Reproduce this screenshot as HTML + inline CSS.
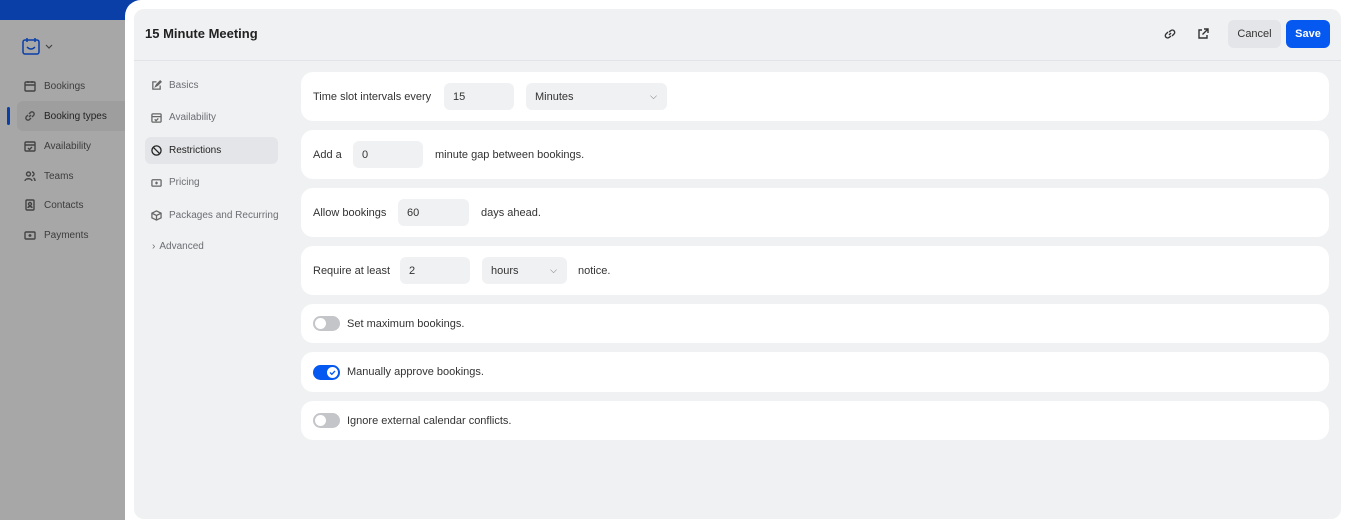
<!DOCTYPE html><html><head><style>
*{box-sizing:border-box;margin:0;padding:0}
body{width:1360px;height:497px;overflow:hidden;position:relative;font-family:"Liberation Sans",sans-serif;background:#a7a7a7;font-size:11px;color:#2a2a2a}
.a{position:absolute}
.nav{left:24px;display:flex;align-items:center;gap:8px;color:#3c3c3c;font-size:10px}
.nav svg{width:12px;height:12px;fill:none;stroke:#444;stroke-width:1.4}
.sn{left:151px;display:flex;align-items:center;gap:7px;color:#6b6e72;font-size:10px}
.sn svg{width:11px;height:11px;fill:none;stroke:#666;stroke-width:1.4}
.card{left:301px;width:1028px;background:#fff;border-radius:12px;display:flex;align-items:center;padding-left:12px;font-size:11px;color:#333}
.in{background:#f0f1f3;border-radius:6px;height:27px;display:flex;align-items:center;padding-left:9px;font-size:11px;color:#333}
.tg{width:27px;height:15px;border-radius:8px;background:#c4c5c8;position:relative;margin-right:7px}
.tg:after{content:"";position:absolute;left:2px;top:2px;width:11px;height:11px;border-radius:50%;background:#fff}
.tg.on:after{display:none}
</style></head><body>
<div class="a" style="left:0;top:0;width:140px;height:20px;background:#0a3fa8"></div>
<svg class="a" style="left:22px;top:37px" width="34" height="20" viewBox="0 0 34 20" fill="none" stroke="#0a3fa8" stroke-width="1.5"><rect x="1" y="3" width="16" height="14" rx="2"/><path d="M5 1v4M13 1v4M5 10q4 4 8 0"/><path d="M24 8l3 3 3-3" stroke="#444" stroke-width="1.2"/></svg>
<div class="a" style="left:17px;top:101px;width:112px;height:30px;background:#9e9e9e;border-radius:6px"></div>
<div class="a" style="left:7px;top:107px;width:3px;height:18px;background:#0a3fa8;border-radius:2px"></div>
<div class="a nav" style="top:80px"><svg viewBox="0 0 12 12"><rect x="1" y="2" width="10" height="9" rx="1"/><path d="M1 5h10M4 1v2M8 1v2"/></svg>Bookings</div>
<div class="a nav" style="top:110px;color:#222"><svg viewBox="0 0 12 12"><path d="M5 7l2-2M4 5L2.5 6.5a2 2 0 003 3L7 8M8 7l1.5-1.5a2 2 0 00-3-3L5 4"/></svg>Booking types</div>
<div class="a nav" style="top:140px"><svg viewBox="0 0 12 12"><rect x="1" y="2" width="10" height="9" rx="1"/><path d="M1 5h10M4 8l1.5 1.5L8 7"/></svg>Availability</div>
<div class="a nav" style="top:170px"><svg viewBox="0 0 12 12"><circle cx="4.5" cy="4" r="2"/><path d="M1 11c0-3 7-3 7 0M8 2a2 2 0 010 4M9.5 8c1 .5 1.5 1.5 1.5 3"/></svg>Teams</div>
<div class="a nav" style="top:199px"><svg viewBox="0 0 12 12"><rect x="2" y="1" width="8" height="10" rx="1"/><circle cx="6" cy="5" r="1.5"/><path d="M4 9c0-2 4-2 4 0"/></svg>Contacts</div>
<div class="a nav" style="top:229px"><svg viewBox="0 0 12 12"><rect x="1" y="3" width="10" height="7" rx="1"/><path d="M6 5v3M4.5 6.5h3"/></svg>Payments</div>
<div class="a" style="left:125px;top:0;width:1240px;height:520px;background:#fff;border-radius:16px 0 0 0"></div>
<div class="a" style="left:134px;top:9px;width:1207px;height:510px;background:#f0f1f3;border-radius:10px"></div>
<div class="a" style="left:134px;top:60px;width:1207px;height:1px;background:#e2e3e6"></div>
<div class="a" style="left:145px;top:26px;font-size:13px;font-weight:bold;color:#222">15 Minute Meeting</div>
<svg class="a" style="left:1163px;top:27px" width="14" height="14" viewBox="0 0 14 14" fill="none" stroke="#333" stroke-width="1.4"><path d="M6 8l2-2M5 5L3 7a2.3 2.3 0 003.3 3.3L8 9M9 9l2-2A2.3 2.3 0 007.7 3.7L6 5"/></svg>
<svg class="a" style="left:1196px;top:27px" width="14" height="14" viewBox="0 0 14 14" fill="none" stroke="#333" stroke-width="1.4"><path d="M6 3H3v8h8V8M8 2h4v4M12 2L6.5 7.5"/></svg>
<div class="a" style="left:1228px;top:20px;width:53px;height:28px;background:#e4e5e8;border-radius:6px;display:flex;align-items:center;justify-content:center;font-size:11px;color:#333">Cancel</div>
<div class="a" style="left:1286px;top:20px;width:44px;height:28px;background:#0558f0;border-radius:6px;display:flex;align-items:center;justify-content:center;font-size:11px;color:#fff;font-weight:bold">Save</div>
<div class="a" style="left:145px;top:137px;width:133px;height:27px;background:#e4e5e8;border-radius:6px"></div>
<div class="a sn" style="top:80px"><svg viewBox="0 0 12 12"><path d="M10 6v4H2V2h4M5 7l1-2 4-4 1 1-4 4z"/></svg>Basics</div>
<div class="a sn" style="top:112px"><svg viewBox="0 0 12 12"><rect x="1" y="2" width="10" height="9" rx="1"/><path d="M1 5h10M4 8l1.5 1.5L8 7"/></svg>Availability</div>
<div class="a sn" style="top:145px;color:#222"><svg viewBox="0 0 12 12" style="stroke:#222"><circle cx="6" cy="6" r="5"/><path d="M2.5 2.5l7 7"/></svg>Restrictions</div>
<div class="a sn" style="top:177px"><svg viewBox="0 0 12 12"><rect x="1" y="3" width="10" height="7" rx="1"/><path d="M6 5v3M4.5 6.5h3"/></svg>Pricing</div>
<div class="a sn" style="top:210px"><svg viewBox="0 0 12 12"><path d="M6 1l5 2.5v5L6 11 1 8.5v-5zM1 3.5L6 6l5-2.5M6 6v5"/></svg>Packages and Recurring</div>
<div class="a sn" style="top:241px;left:152px;gap:4px">›<span>Advanced</span></div>
<div class="a card" style="top:72px;height:49px">Time slot intervals every<div class="in" style="position:absolute;left:143px;top:11px;width:70px">15</div><div class="in" style="position:absolute;left:225px;top:11px;width:141px">Minutes<span style="position:absolute;right:10px;font-size:9px;color:#666">⌵</span></div></div>
<div class="a card" style="top:130px;height:49px">Add a<div class="in" style="position:absolute;left:52px;top:11px;width:70px">0</div><span style="position:absolute;left:134px">minute gap between bookings.</span></div>
<div class="a card" style="top:188px;height:49px">Allow bookings<div class="in" style="position:absolute;left:97px;top:11px;width:71px">60</div><span style="position:absolute;left:180px">days ahead.</span></div>
<div class="a card" style="top:246px;height:49px">Require at least<div class="in" style="position:absolute;left:99px;top:11px;width:70px">2</div><div class="in" style="position:absolute;left:181px;top:11px;width:85px">hours<span style="position:absolute;right:10px;font-size:9px;color:#666">⌵</span></div><span style="position:absolute;left:277px">notice.</span></div>
<div class="a card" style="top:304px;height:39px"><div class="tg"></div>Set maximum bookings.</div>
<div class="a card" style="top:352px;height:40px"><div class="tg on" style="background:#0558f0"><svg style="position:absolute;left:14px;top:2px" width="11" height="11" viewBox="0 0 11 11"><circle cx="5.5" cy="5.5" r="5.5" fill="#fff"/><path d="M3 5.5l1.8 1.8L8 4" fill="none" stroke="#0558f0" stroke-width="1.3"/></svg></div>Manually approve bookings.</div>
<div class="a card" style="top:401px;height:39px"><div class="tg"></div>Ignore external calendar conflicts.</div>
</body></html>
